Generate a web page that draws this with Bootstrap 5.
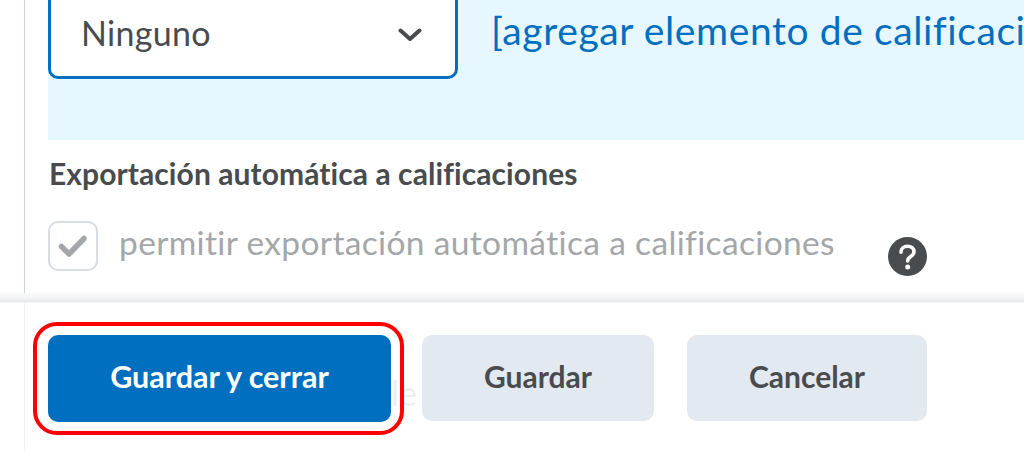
<!DOCTYPE html>
<html lang="es">
<head>
    <meta charset="UTF-8">
    <meta name="viewport" content="width=device-width, initial-scale=1.0">
    <title>Guardar y cerrar</title>
    <link href="https://cdn.jsdelivr.net/npm/bootstrap@5.3.0/dist/css/bootstrap.min.css" rel="stylesheet">
    <style>
        html, body { height: 452px; overflow: hidden; background: #fff; }
        body { font-family: Lato, "Open Sans", sans-serif; color: #494c4e; }

        /* scrolled form area */
        .form-area { height: 293px; overflow: hidden; margin-left: 24px; border-left: 1px solid #cdd5dc; padding-left: 23px; }
        .grade-panel { height: 140px; background: #e6f7ff; }
        .grade-select { width: 410px; height: 112px; margin-top: -33px; flex-shrink: 0; padding: 18px 33px 0 30px; background: #fff; border: 3px solid #006fbf; border-radius: 10px; font-size: 34px; letter-spacing: .3px; }
        .grade-caret { margin-top: 5px; }
        .grade-link { margin-left: 33px; margin-top: 5px; font-size: 39px; line-height: 50px; color: #006fbf; white-space: nowrap; text-decoration: none; letter-spacing: .6px; }
        .export-title { margin: 16px 0 0 1px; font-size: 30px; line-height: 34px; font-weight: 700; letter-spacing: .08px; }
        .export-row { margin-top: 31px; }
        .export-check { width: 50px; height: 50px; flex-shrink: 0; border: 2px solid #d8dde1; border-radius: 10px; }
        .export-label { margin-left: 21px; margin-top: -4px; font-size: 33.5px; line-height: 50px; color: #a4a7a9; letter-spacing: .35px; white-space: nowrap; }
        .help-icon { margin-left: 53px; margin-top: 16px; flex-shrink: 0; }

        .footer-bar { height: 159px; padding: 42px 0 0 48px; gap: 31px; background: linear-gradient(#f8f8f8 0, #f4f5f5 5px, #e6e8ea 8px, #e9ecef 9px, #fff 10px); }
        .footer-bar::before { content: ""; position: absolute; left: 24px; top: 303px; bottom: 0; border-left: 1px solid #eef2f5; }
        .save-wrap { z-index: 1; }
        .btn.save-btn { height: 87px; padding-bottom: 9px; border: 0; border-radius: 10px; font-size: 30px; font-weight: 700; }
        .btn.save-main { width: 343px; background: #006fbf; color: #fff; font-size: 30.5px; }
        .btn.save-other { height: 86px; background: #e3e9f1; color: #494c4e; }
        .save-ghost { left: 343px; top: 38px; font-size: 34px; line-height: 40px; color: #eeeeee; z-index: -1; white-space: nowrap; }
        .red-outline { left: -15px; right: -13px; top: -13px; bottom: -13px; border: 4px solid #ff0000; border-radius: 24px; pointer-events: none; }
    </style>
</head>
<body>
    <!-- Form area, cut off at the top by the scroll position -->
    <div class="form-area">
        <div class="grade-panel d-flex">
            <div class="grade-select d-flex align-items-center justify-content-between">
                <span>Ninguno</span>
                <svg class="grade-caret" width="24" height="14" viewBox="0 0 24 14"><path d="M2.500 2.500 12 11 21.500 2.500" fill="none" stroke="#494c4e" stroke-width="4" stroke-linecap="round" stroke-linejoin="round"/></svg>
            </div>
            <a class="grade-link" href="#">[agregar elemento de calificación]</a>
        </div>
        <div class="export-title">Exportación automática a calificaciones</div>
        <div class="export-row d-flex">
            <div class="export-check d-flex align-items-center justify-content-center">
                <svg width="32" height="26" viewBox="0 0 32 26"><path d="M4.500 13.500 12 21 27 5.500" fill="none" stroke="#a4a7a9" stroke-width="5.500" stroke-linecap="round" stroke-linejoin="round"/></svg>
            </div>
            <label class="export-label">permitir exportación automática a calificaciones</label>
            <svg class="help-icon" width="39" height="39" viewBox="0 0 39 39">
                <circle cx="19.500" cy="19.500" r="19.500" fill="#494c4e"/>
                <path d="M13 15.200c0-3.800 2.900-6 6.500-6 3.700 0 6.500 2.200 6.500 5.500 0 4.900-6.300 4.800-6.300 9.300" fill="none" stroke="#fff" stroke-width="3.600" stroke-linecap="round"/>
                <circle cx="19.700" cy="30" r="2.500" fill="#fff"/>
            </svg>
        </div>
    </div>

    <!-- Button bar -->
    <div class="footer-bar d-flex align-items-start">
        <div class="save-wrap position-relative">
            <span class="save-ghost position-absolute">le</span>
            <button type="button" class="btn save-btn save-main">Guardar y cerrar</button>
            <div class="red-outline position-absolute"></div>
        </div>
        <button type="button" class="btn save-btn save-other" style="width:232px">Guardar</button>
        <button type="button" class="btn save-btn save-other" style="width:240px; margin-left:2px">Cancelar</button>
    </div>

    <script src="https://cdn.jsdelivr.net/npm/bootstrap@5.3.0/dist/js/bootstrap.bundle.min.js"></script>
</body>
</html>
